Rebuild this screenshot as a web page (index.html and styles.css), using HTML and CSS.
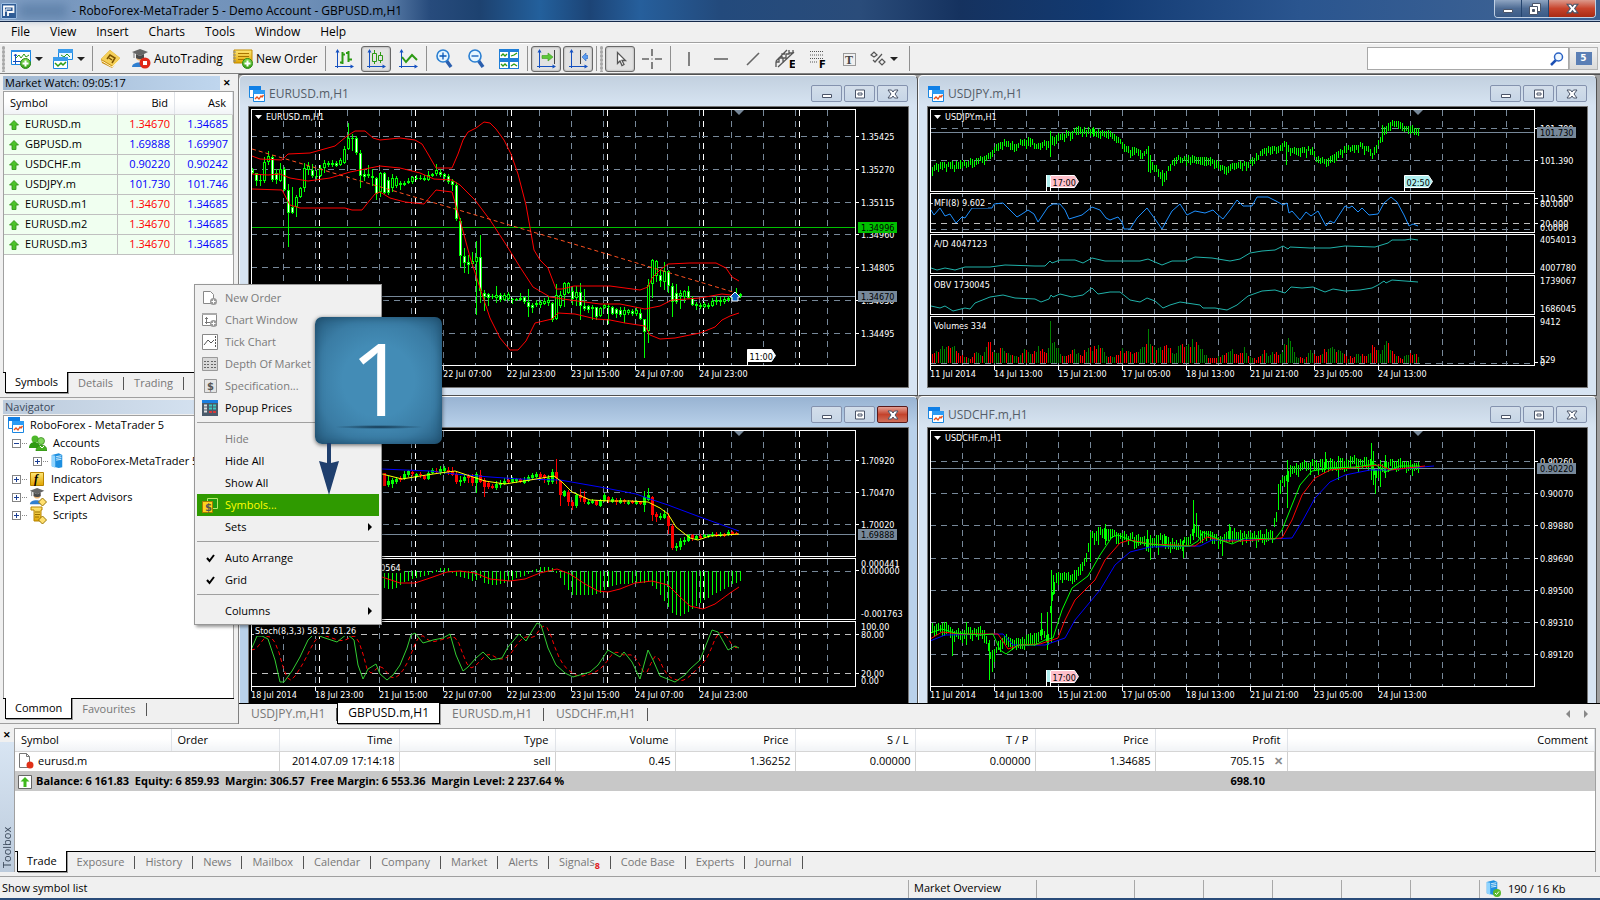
FILE: index.html
```
<!DOCTYPE html>
<html lang="en">
<head>
<meta charset="UTF-8">
<meta name="viewport" content="width=device-width, initial-scale=1.0">
<title>RoboForex-MetaTrader 5</title>
<link rel="stylesheet" href="styles.css">
</head>
<body>

<svg class="defs" aria-hidden="true">
  <defs>
    <linearGradient id="g-green" x1="0" y1="0" x2="0" y2="1"><stop offset="0" stop-color="#8be05a"/><stop offset="1" stop-color="#2f9a12"/></linearGradient>
    <linearGradient id="g-gold" x1="0" y1="0" x2="0" y2="1"><stop offset="0" stop-color="#ffe878"/><stop offset="1" stop-color="#e0a400"/></linearGradient>
    <symbol id="i-charts" viewBox="0 0 16 16">
      <path d="M.5 1.500h11v10H.5z" fill="#fff" stroke="#1a86e0"/><path d="M0 0h12v4H0z" fill="#0f7fe6"/>
      <path d="M4.500 5.500h11v10h-11z" fill="#fff" stroke="#1a86e0"/><path d="M4 4h12v4H4z" fill="#2b9bf4"/>
      <path d="M6 13l2-2 2 2 2-3 1 1 1.500-2" fill="none" stroke="#e8501a" stroke-width="1.300"/>
    </symbol>
    <symbol id="i-up" viewBox="0 0 10 10"><path d="M5 .5L9.500 5H7v4.500H3V5H.5z" fill="#4cc22a" stroke="#2a8f12" stroke-width=".8"/></symbol>
    <symbol id="i-min" viewBox="0 0 12 12"><path d="M1.500 6.500h9v3h-9z" fill="#fff" stroke="#4a5468"/></symbol>
    <symbol id="i-max" viewBox="0 0 12 12"><path d="M1.500 2h9v8h-9z" fill="#fff" stroke="#4a5468"/><path d="M4 5h4v2H4z" fill="#fff" stroke="#4a5468"/></symbol>
    <symbol id="i-restore" viewBox="0 0 12 12"><path d="M3.500 .5h8v8h-8z" fill="#fff" stroke="#4a5468"/><path d="M.5 3.500h8v8h-8z" fill="#fff" stroke="#4a5468"/><path d="M3.500 6.500h2v2h-2z" fill="#456" stroke="#4a5468"/></symbol>
    <symbol id="i-x" viewBox="0 0 12 12"><path d="M1 2h3.500L6 4l1.500-2H11L8 6l3 4H7.500L6 8l-1.500 2H1l3-4z" fill="#fff" stroke="#4a5468"/></symbol>
    <symbol id="i-zoomin" viewBox="0 0 20 20"><path d="M11 11l5 7" stroke="#2b5fae" stroke-width="3.500"/><circle cx="8" cy="7" r="6" fill="#e6f6ff" stroke="#2a7fd2" stroke-width="1.600"/><path d="M8 3.500v7M4.500 7h7" stroke="#0a58b8" stroke-width="1.300"/></symbol>
    <symbol id="i-zoomout" viewBox="0 0 20 20"><path d="M11 11l5 7" stroke="#2b5fae" stroke-width="3.500"/><circle cx="8" cy="7" r="6" fill="#e6f6ff" stroke="#2a7fd2" stroke-width="1.600"/><path d="M4.500 7h7" stroke="#0a58b8" stroke-width="1.300"/></symbol>
    <symbol id="i-axes" viewBox="0 0 20 20"><path d="M3.500 3v16M1 17.500h17" stroke="#1450c0" fill="none"/><path d="M3.500 0l2 3.500h-4zM20 17.500l-3.500-2v4z" fill="#1450c0"/></symbol>
    <symbol id="i-hat" viewBox="0 0 20 20"><path d="M5 8c0 5 8 5 8 0z" fill="#e8b070"/><path d="M1 18c0-6 14-6 14 0z" fill="#2f7fd0"/><path d="M9 0l8 3-8 4-8-4z" fill="#666"/><path d="M5 5v4c2 1.500 6 1.500 8 0V5l-4 2z" fill="#4a4a4a"/><path d="M3 4v5" stroke="#777"/></symbol>
    <symbol id="i-server" viewBox="0 0 16 18"><path d="M2 2l8-2 4 2v14l-4 1-8-2z" fill="#1d8fe0"/><path d="M2 2l4 1v14l-4-2z" fill="#8fd4ff"/><path d="M7 4l6-1M7 6l6-1M7 8l6-1" stroke="#e6f7ff"/></symbol>
  </defs>
</svg>

<header class="titlebar">
  <svg class="applogo" viewBox="0 0 16 16"><path d="M0 0h16v16H0z" fill="#2c5a94"/><path d="M.5 .5h15v15H.5z" fill="none" stroke="#9fc0e4"/><path d="M3 13V3.500h9.500V9H7v4" fill="none" stroke="#fff" stroke-width="1.800"/><path d="M5 9V6h5" fill="none" stroke="#fff"/></svg>
  <span class="account"></span>
  <h1>- RoboForex-MetaTrader 5 - Demo Account - GBPUSD.m,H1</h1>
  <div class="syswin">
    <button aria-label="Minimize"><svg width="12" height="12"><use href="#i-min"/></svg></button>
    <button aria-label="Restore"><svg width="12" height="12"><use href="#i-restore"/></svg></button>
    <button class="sysclose" aria-label="Close"><svg width="13" height="13"><use href="#i-x"/></svg></button>
  </div>
</header>

<nav class="menubar">
  <button>File</button><button>View</button><button>Insert</button><button>Charts</button><button>Tools</button><button>Window</button><button>Help</button>
</nav>

<div class="toolbar">
  <span class="grip"></span>
  <button class="split" aria-label="New chart"><svg width="20" height="20"><path d="M.5 1.500h19v14H.5z" fill="#fff" stroke="#1a86e0"/><path d="M0 1h20v2H0z" fill="#2b8fe8"/><path d="M4.500 5v10M2 12.500h14M3 7l1.500-2L6 7" stroke="#1450c0" fill="none"/><path d="M5 9l3-3 2 3 3-4 2 3 3-2" stroke="#2d9a14" fill="none"/><circle cx="14.500" cy="14.500" r="5" fill="url(#g-green)" stroke="#2c8a14"/><path d="M14.500 11.500v6M11.500 14.500h6" stroke="#fff" stroke-width="2"/></svg><i class="caret"></i></button>
  <button class="split" aria-label="Profiles"><svg width="20" height="20"><path d="M5.500 .5h14v10h-14z" fill="#e9f6ff" stroke="#1a86e0"/><path d="M5 0h15v4H5z" fill="#3a9cec"/><path d="M8 6l3 2 3-3 3 3" stroke="#2d9a14" fill="none"/><path d="M.5 8.500h14v11H.5z" fill="#fff" stroke="#1a86e0"/><path d="M0 8h15v4H0z" fill="#3a9cec"/><path d="M2 14l3 3 3-3 2 2 3-3" stroke="#2d9a14" fill="none" stroke-width="1.500"/></svg><i class="caret"></i></button>
  <span class="sep"></span>
  <button class="tool" aria-label="Metaquotes"><svg width="20" height="20"><path d="M0 10L9 1l10 8-8 10L1 14z" fill="#c88c10"/><path d="M0 10L9 1l10 8-7 8z" fill="#f4cf58"/><path d="M6 10l3-4 5 3-3 5M8 9l3 2" fill="none" stroke="#7a5200" stroke-width="1.500"/><path d="M1 12l10 6 8-8" fill="none" stroke="#fff3c0"/></svg></button>
  <button class="wide"><svg width="20" height="20"><use href="#i-hat"/><circle cx="14" cy="14" r="5.500" fill="#e02818"/><path d="M12 12h4v4h-4z" fill="#fff"/></svg>AutoTrading</button>
  <button class="wide"><svg width="20" height="20"><path d="M1 1h18v13H1z" fill="url(#g-gold)" stroke="#c08a00"/><path d="M5 4.500h11M5 7.500h11M5 10.500h7" stroke="#a87400"/><path d="M0 3h3M0 6h3M0 9h3M0 12h3" stroke="#888"/><circle cx="14.500" cy="14.500" r="5" fill="url(#g-green)" stroke="#2c8a14"/><path d="M14.500 11.500v6M11.500 14.500h6" stroke="#fff" stroke-width="2"/></svg>New Order</button>
  <span class="sep"></span>
  <button class="tool" aria-label="Bar chart"><svg width="20" height="20"><use href="#i-axes"/><path d="M8.500 3v12M6 13.500h3M8 5.500h3M14.500 2v11M12 4h3M14 10.500h4" stroke="#2d9a14" stroke-width="2" fill="none"/></svg></button>
  <button class="tool on" aria-label="Candlesticks"><svg width="20" height="20"><use href="#i-axes"/><path d="M8.500 1v3M8.500 13v2M14.500 3v3M14.500 12v2M6.500 4.500h4v8h-4zM12.500 6.500h4v5h-4z" stroke="#2d9a14" fill="none"/></svg></button>
  <button class="tool" aria-label="Line chart"><svg width="20" height="20"><use href="#i-axes"/><path d="M4 8l4 5 6-7 5 5" stroke="#2d9a14" stroke-width="2" fill="none"/></svg></button>
  <span class="sep"></span>
  <button class="tool" aria-label="Zoom in"><svg width="20" height="20"><use href="#i-zoomin"/></svg></button>
  <button class="tool" aria-label="Zoom out"><svg width="20" height="20"><use href="#i-zoomout"/></svg></button>
  <button class="tool" aria-label="Tile windows"><svg width="20" height="20"><path d="M0 0h20v20H0z" fill="#1f7fd8"/><path d="M1 3h8v6H1zM11 3h8v6h-8zM1 13h8v6H1zM11 13h8v6h-8z" fill="#fff"/><path d="M2 7l2-2 2 2 2-2M12 7l3-1 3-2M2 15l2 2 2-2 2 2M12 17l3-2 3 2" stroke="#2d9a14" fill="none" stroke-width="1.300"/></svg></button>
  <span class="sep"></span>
  <button class="tool on" aria-label="Auto scroll"><svg width="20" height="20"><use href="#i-axes"/><path d="M18.500 1v14" stroke="#444"/><path d="M6 6.500h6V4l5 4-5 4V9.500H6z" fill="#5cc83a" stroke="#3a9a1c" stroke-width=".6"/></svg></button>
  <button class="tool on" aria-label="Chart shift"><svg width="20" height="20"><use href="#i-axes"/><path d="M12.500 1v14" stroke="#444"/><path d="M20 6.500h-2V4l-4 4 4 4V9.500h2z" fill="#5a9cf0" stroke="#2a66c0" stroke-width=".6"/></svg></button>
  <span class="sep"></span>
  <span class="grip"></span>
  <button class="tool on" aria-label="Cursor"><svg width="20" height="20"><path d="M7.500 3.500v11l2.500-2.500 2 4.500 2-1-2-4h3.500z" fill="#fff" stroke="#555" stroke-width="1.300"/></svg></button>
  <button class="tool" aria-label="Crosshair"><svg width="20" height="20"><path d="M10 0v7M10 13v7M0 10h7M13 10h7M9.500 10h1" stroke="#666" stroke-width="1.600"/></svg></button>
  <span class="sep"></span>
  <button class="tool" aria-label="Vertical line"><svg width="20" height="20"><path d="M10 3v14" stroke="#666" stroke-width="1.600"/></svg></button>
  <button class="tool" aria-label="Horizontal line"><svg width="20" height="20"><path d="M3 10h14" stroke="#666" stroke-width="1.600"/></svg></button>
  <button class="tool" aria-label="Trendline"><svg width="20" height="20"><path d="M4 16L16 4" stroke="#666" stroke-width="1.600"/></svg></button>
  <button class="tool" aria-label="Channel"><svg width="20" height="20"><path d="M1 12L12 1M3 18L19 3M1 18v-5h3V9h3V5h3M8 14V9h3V5h3V1M14 4h4v-3" stroke="#555" fill="none" stroke-width="1.300"/><text x="14" y="19" class="glyph">E</text></svg></button>
  <button class="tool" aria-label="Fibonacci"><svg width="20" height="20"><path d="M3 2.500h14M3 6h14M3 9.500h14M3 13h8" stroke="#555" stroke-dasharray="1 1"/><text x="12" y="19" class="glyph">F</text></svg></button>
  <button class="tool" aria-label="Text label"><svg width="20" height="20"><path d="M4.500 4.500h12v12h-12z" fill="none" stroke="#444" stroke-dasharray="1 1"/><text x="6" y="15" class="glyph tee">T</text></svg></button>
  <button class="split arrows" aria-label="Arrows"><svg width="16" height="20"><path d="M1 6l3-3 3 3-3 2zM9 13l3-3 3 3-3 3zM3 11l2 2 7-8" fill="none" stroke="#555" stroke-width="1.200"/></svg><i class="caret"></i></button>
  <span class="sep"></span>
  <label class="search"><input type="search" aria-label="Search"><svg width="14" height="14"><path d="M6 8l-5 5" stroke="#1c50b4" stroke-width="2.500"/><circle cx="8.500" cy="5" r="4" fill="#eef7ff" stroke="#2a62c4" stroke-width="1.500"/></svg></label>
  <button class="chat"><span>5</span></button>
</div>

<main class="work">
  <aside class="dock">
    <section class="panel watch">
      <header class="phead"><h2>Market Watch: 09:05:17</h2><button class="close" aria-label="Close Market Watch">✕</button></header>
      <div class="pbody">
        <table class="quotes">
          <thead><tr><th>Symbol</th><th>Bid</th><th>Ask</th></tr></thead>
          <tbody>
            <tr><td><svg width="10" height="10"><use href="#i-up"/></svg>EURUSD.m</td><td class="down">1.34670</td><td>1.34685</td></tr>
            <tr><td><svg width="10" height="10"><use href="#i-up"/></svg>GBPUSD.m</td><td>1.69888</td><td>1.69907</td></tr>
            <tr><td><svg width="10" height="10"><use href="#i-up"/></svg>USDCHF.m</td><td>0.90220</td><td>0.90242</td></tr>
            <tr><td><svg width="10" height="10"><use href="#i-up"/></svg>USDJPY.m</td><td>101.730</td><td>101.746</td></tr>
            <tr><td><svg width="10" height="10"><use href="#i-up"/></svg>EURUSD.m1</td><td class="down">1.34670</td><td>1.34685</td></tr>
            <tr><td><svg width="10" height="10"><use href="#i-up"/></svg>EURUSD.m2</td><td class="down">1.34670</td><td>1.34685</td></tr>
            <tr><td><svg width="10" height="10"><use href="#i-up"/></svg>EURUSD.m3</td><td class="down">1.34670</td><td>1.34685</td></tr>
          </tbody>
        </table>
      </div>
      <div class="tabs"><button class="active">Symbols</button><button>Details</button><button>Trading</button></div>
    </section>

    <section class="panel navi">
      <header class="phead"><h2>Navigator</h2></header>
      <ul class="pbody tree">
        <li class="root"><svg width="16" height="16"><use href="#i-charts"/></svg>RoboForex - MetaTrader 5</li>
        <li><i class="knob minus"></i><svg width="18" height="16"><circle cx="6" cy="4" r="3.500" fill="#4db82a"/><path d="M0 13c0-8 11-8 11 0z" fill="#2f9a12"/><circle cx="12" cy="6" r="3.500" fill="#7ed65a" stroke="#2a7f10" stroke-width=".7"/><path d="M7 16c0-8 11-8 11 0z" fill="#44b020" stroke="#2a7f10" stroke-width=".7"/><path d="M11 11l2 2 2-2" stroke="#fff" fill="none"/></svg>Accounts</li>
        <li class="sub"><i class="knob"></i><svg width="14" height="16"><use href="#i-server"/></svg>RoboForex-MetaTrader 5</li>
        <li><i class="knob"></i><svg width="16" height="16"><path d="M1.500 1.500h13v13h-13z" fill="url(#g-gold)" stroke="#b88400"/><text x="5" y="12" class="glyph fx">f</text></svg>Indicators</li>
        <li><i class="knob"></i><svg width="18" height="18"><use href="#i-hat"/><path d="M13.500 10l4 4-4 4-4-4z" fill="#ffe070" stroke="#9a7400"/></svg>Expert Advisors</li>
        <li><i class="knob"></i><svg width="18" height="18"><path d="M2 1h11v3h-1v11H5V4H2z" fill="url(#g-gold)" stroke="#b88400"/><path d="M6 6h5M6 8.500h5M6 11h4" stroke="#9a7000"/><path d="M13.500 10l4 4-4 4-4-4z" fill="#ffe070" stroke="#9a7400"/></svg>Scripts</li>
      </ul>
      <div class="tabs"><button class="active">Common</button><button>Favourites</button></div>
    </section>
  </aside>

  <section class="mdi">
    <div class="windows">
      <article class="win">
        <header><svg width="16" height="16"><use href="#i-charts"/></svg><h2>EURUSD.m,H1</h2><button aria-label="Minimize"><svg width="12" height="12"><use href="#i-min"/></svg></button><button aria-label="Maximize"><svg width="12" height="12"><use href="#i-max"/></svg></button><button aria-label="Close"><svg width="12" height="12"><use href="#i-x"/></svg></button></header>
        <svg class="chart" id="eurusd"></svg>
      </article>
      <article class="win">
        <header><svg width="16" height="16"><use href="#i-charts"/></svg><h2>USDJPY.m,H1</h2><button aria-label="Minimize"><svg width="12" height="12"><use href="#i-min"/></svg></button><button aria-label="Maximize"><svg width="12" height="12"><use href="#i-max"/></svg></button><button aria-label="Close"><svg width="12" height="12"><use href="#i-x"/></svg></button></header>
        <svg class="chart" id="usdjpy"></svg>
      </article>
      <article class="win front">
        <header><svg width="16" height="16"><use href="#i-charts"/></svg><h2>GBPUSD.m,H1</h2><button aria-label="Minimize"><svg width="12" height="12"><use href="#i-min"/></svg></button><button aria-label="Maximize"><svg width="12" height="12"><use href="#i-max"/></svg></button><button class="red" aria-label="Close"><svg width="12" height="12"><use href="#i-x"/></svg></button></header>
        <svg class="chart" id="gbpusd"></svg>
      </article>
      <article class="win">
        <header><svg width="16" height="16"><use href="#i-charts"/></svg><h2>USDCHF.m,H1</h2><button aria-label="Minimize"><svg width="12" height="12"><use href="#i-min"/></svg></button><button aria-label="Maximize"><svg width="12" height="12"><use href="#i-max"/></svg></button><button aria-label="Close"><svg width="12" height="12"><use href="#i-x"/></svg></button></header>
        <svg class="chart" id="usdchf"></svg>
      </article>
    </div>
    <div class="tabs charttabs">
      <button>USDJPY.m,H1</button><button class="active">GBPUSD.m,H1</button><button>EURUSD.m,H1</button><button>USDCHF.m,H1</button>
      <span class="scroll"><i class="left"></i><i class="right"></i></span>
    </div>
  </section>
</main>

<section class="toolbox">
  <div class="side"><button class="close" aria-label="Close Toolbox">✕</button><h2>Toolbox</h2></div>
  <div class="boxbody">
    <table class="trade">
      <colgroup><col class="c-sym"><col class="c-ord"><col class="c-num"><col class="c-sym"><col class="c-num"><col class="c-num"><col class="c-num"><col class="c-num"><col class="c-num"><col class="c-pro"><col></colgroup>
      <thead><tr><th>Symbol</th><th>Order</th><th>Time</th><th>Type</th><th>Volume</th><th>Price</th><th>S / L</th><th>T / P</th><th>Price</th><th>Profit</th><th>Comment</th></tr></thead>
      <tbody>
        <tr><td><svg width="16" height="16"><path d="M1.500 .5h7l3 3v11h-10z" fill="#fff" stroke="#777"/><path d="M8.500 .5v3h3" fill="none" stroke="#777"/><circle cx="12" cy="12" r="3.500" fill="#e03018"/></svg>eurusd.m</td><td></td><td>2014.07.09 17:14:18</td><td>sell</td><td>0.45</td><td>1.36252</td><td>0.00000</td><td>0.00000</td><td>1.34685</td><td class="profit">705.15<button class="drop" aria-label="Close position">✕</button></td><td></td></tr>
        <tr class="total"><td colspan="9"><svg width="14" height="14"><path d="M.5 .5h13v13H.5z" fill="#fff" stroke="#666"/><path d="M7 2l4.500 4.500H8.500V12h-3V6.500h-3z" fill="#3fb81c"/></svg>Balance: 6 161.83&nbsp; Equity: 6 859.93&nbsp; Margin: 306.57&nbsp; Free Margin: 6 553.36&nbsp; Margin Level: 2 237.64 %</td><td class="profit">698.10</td><td></td></tr>
      </tbody>
    </table>
    <div class="fill"></div>
    <div class="tabs">
      <button class="active">Trade</button><button>Exposure</button><button>History</button><button>News</button><button>Mailbox</button><button>Calendar</button><button>Company</button><button>Market</button><button>Alerts</button><button>Signals<sub>8</sub></button><button>Code Base</button><button>Experts</button><button>Journal</button>
    </div>
  </div>
</section>

<footer class="status">
  <span class="hint">Show symbol list</span><span class="s1">Market Overview</span><span class="s2"></span><span class="s3"></span><span class="s3"></span><span class="s3"></span><span class="s3"></span><span class="s3"></span>
  <span class="net"><svg width="18" height="18"><use href="#i-server" width="14" height="16"/><circle cx="12" cy="13" r="4" fill="#58b82c"/><path d="M10 13l1.500 1.500L14 11.500" stroke="#fff" fill="none"/></svg>190 / 16 Kb</span>
</footer>

<ul class="popup">
  <li><button disabled><svg width="16" height="16"><path d="M1.500 1.500h7l3 3v9h-10z" fill="#fff" stroke="#888"/><circle cx="11.500" cy="11.500" r="3.500" fill="#999"/><path d="M11.500 9.500v4M9.500 11.500h4" stroke="#fff"/></svg>New Order</button></li>
  <li><button disabled><svg width="16" height="16"><path d="M.5 1.500h14v12H.5z" fill="#fff" stroke="#888"/><path d="M0 1h15v2H0z" fill="#aaa"/><path d="M4.500 5v7M3 6.500h3M3 10.500h5" stroke="#777"/><circle cx="11.500" cy="11.500" r="3.500" fill="#999"/><path d="M11.500 9.500v4M9.500 11.500h4" stroke="#fff"/></svg>Chart Window</button></li>
  <li><button disabled><svg width="16" height="16"><path d="M.5 .5h15v15H.5z" fill="#fff" stroke="#888"/><path d="M2 11l4-5 3 3 3-3" fill="none" stroke="#555"/><path d="M13.500 2v12" stroke="#555" stroke-dasharray="2 1"/></svg>Tick Chart</button></li>
  <li><button disabled><svg width="16" height="16"><path d="M.5 1.500h15v13H.5z" fill="#d8d8d8" stroke="#999"/><path d="M2 5.500h5M9 5.500h5M2 8.500h5M9 8.500h5M2 11.500h5M9 11.500h5" stroke="#666" stroke-dasharray="2 1"/></svg>Depth Of Market</button></li>
  <li><button disabled><svg width="16" height="16"><path d="M2.500 1.500h12v13h-12z" fill="#e4e4e4" stroke="#999"/><text x="5" y="12" class="glyph money">$</text></svg>Specification...</button></li>
  <li><button><svg width="16" height="16"><path d="M0 0h16v16H0z" fill="#4a5a6a"/><path d="M0 0h16v3H0z" fill="#1a7fe0"/><path d="M2 5.500h3M2 8.500h3M2 11.500h3" stroke="#ddd" stroke-width="2"/><path d="M7 5.500h3M11 5.500h3M7 8.500h3M11 8.500h3" stroke="#3cc8c0" stroke-width="2"/><path d="M7 12h3M11 12h3" stroke="#d83838" stroke-width="2"/></svg>Popup Prices</button></li>
  <li class="rule"></li>
  <li><button disabled>Hide</button></li>
  <li><button>Hide All</button></li>
  <li><button>Show All</button></li>
  <li><button class="hot"><svg width="16" height="16"><path d="M5.500 1.500h10v10h-10z" fill="#1f9a10" stroke="#b8e86a"/><path d="M.5 4.500h10v11H.5z" fill="#ffd21c" stroke="#a87a00"/><text x="3" y="14" class="glyph money">$</text></svg>Symbols...</button></li>
  <li><button>Sets<i class="more"></i></button></li>
  <li class="rule"></li>
  <li><button><svg width="16" height="16"><path d="M5 8l2.500 3L12 5" fill="none" stroke="#000" stroke-width="2"/></svg>Auto Arrange</button></li>
  <li><button><svg width="16" height="16"><path d="M5 8l2.500 3L12 5" fill="none" stroke="#000" stroke-width="2"/></svg>Grid</button></li>
  <li class="rule"></li>
  <li><button>Columns<i class="more"></i></button></li>
</ul>

<div class="step">1</div>
<svg class="pointer" width="20" height="52"><path d="M8 0h4v20l8-2L10 52 0 18l8 2z" fill="#1f3f6e"/></svg>

<script src="charts.js"></script>
</body>
</html>
```
FILE: styles.css
```
*{
    box-sizing:border-box;
}

body{
    margin:0;
    height:100vh;
    display:grid;
    grid-template-rows:22px 21px 31px minmax(0,1fr) 153px 23px;
    overflow:hidden;
    font:11px/16px "Open Sans","Noto Sans",sans-serif;
    color:#000;
    background:#f0f0f0;
}

h1,h2,ul{
    margin:0;
    padding:0;
    font-size:inherit;
    font-weight:normal;
    list-style:none;
}

button{
    font:inherit;
    color:inherit;
    background:none;
    border:0;
    padding:0;
    white-space:nowrap;
}

svg{
    flex:none;
}

.defs{
    position:absolute;
    width:0;
    height:0;
}

.glyph{
    font:bold 10px "DejaVu Sans",sans-serif;
}

.tee{
    font:bold 12px "Liberation Serif",serif;
    fill:#444;
}

.fx{
    font:italic bold 12px "Liberation Serif",serif;
}

.money{
    fill:#555;
}

/* title bar */
.titlebar{
    display:flex;
    align-items:center;
    padding:0 4px 0 1px;
    font-size:12px;
    background:linear-gradient(90deg,#7d9cc2 0,#6f90b8 300px,#5b7ea9 385px,#274b7c 430px,#1d4270 480px,#23609c 540px,#1c4476 590px,#265f9c 640px,#234a7c 720px,#2a4c7a 860px,#15325f 960px,#123a72 1100px,#2a558f 1300px,#3a6093 1500px);
    border-bottom:1px solid #16294a;
    box-shadow:inset 0 -1px #b4c8e0;
}

.applogo{
    width:16px;
    height:16px;
}

.account{
    width:48px;
    height:14px;
    margin:0 5px 0 2px;
    background:#6284ac;
    filter:blur(5px);
}

.syswin{
    display:flex;
    align-self:flex-start;
    margin-left:auto;
    border:1px solid #c0d0e4;
    border-top:0;
    border-radius:0 0 4px 4px;
    overflow:hidden;
}

.syswin button{
    width:27px;
    height:17px;
    display:flex;
    align-items:center;
    justify-content:center;
    border-right:1px solid #24446e;
    background:linear-gradient(#8fa5c2,#4d6b94 50%,#3a5a86);
}

.syswin .sysclose{
    width:46px;
    border:0;
    background:linear-gradient(#dc9a8c,#c8442c 50%,#a82a14);
}

/* menu */
.menubar{
    display:flex;
    align-items:center;
    gap:20px;
    padding-left:11px;
    font-size:12px;
    border-bottom:1px solid #a0a0a0;
}

/* toolbar */
.toolbar{
    display:flex;
    align-items:center;
    gap:2px;
    padding:0 2px;
    border-top:1px solid #fff;
    border-bottom:1px solid #808080;
}

.toolbar button{
    display:flex;
    align-items:center;
}

.grip{
    width:3px;
    height:26px;
    background:radial-gradient(#a8a8a8 1px,transparent 2px) 0 0/3px 4px;
}

.sep{
    width:1px;
    height:25px;
    margin:0 1px;
    background:#909090;
}

.toolbar .split{
    width:40px;
    gap:4px;
    padding-left:4px;
}

.caret{
    border:4px solid transparent;
    border-top-color:#222;
    border-bottom:0;
}

.toolbar .tool{
    width:30px;
    height:26px;
    justify-content:center;
}

.toolbar .tool.on{
    border:1px solid #686868;
    border-radius:3px;
    background:#e2e2e2;
    box-shadow:inset 0 0 2px #888;
}

.toolbar .wide{
    gap:3px;
    padding:0 5px 0 3px;
    font-size:12px;
}

.search{
    display:flex;
    align-items:center;
    width:202px;
    height:23px;
    margin-left:auto;
    padding-right:4px;
    background:#fff;
    border:1px solid #a8a8a8;
}

.search input{
    flex:1;
    min-width:0;
    border:0;
    background:none;
}

.toolbar .chat{
    width:29px;
    height:23px;
    justify-content:center;
    margin-left:-2px;
    border:1px solid #b4b4b4;
    background:linear-gradient(#f2f2f2,#dadada);
}

.chat span{
    width:16px;
    height:13px;
    font:bold 9px/13px "DejaVu Sans",sans-serif;
    color:#fff;
    background:#5b7fb5;
    text-align:center;
}

/* dock */
.work{
    display:grid;
    grid-template-columns:238px minmax(0,1fr);
    min-height:0;
}

.dock{
    display:grid;
    grid-template-rows:324px minmax(0,1fr);
}

.panel{
    display:flex;
    flex-direction:column;
    min-height:0;
    padding:2px 4px 4px 3px;
    border-bottom:1px solid #a0a0a0;
}

.phead{
    display:flex;
    align-items:center;
    height:14px;
    margin-bottom:1px;
}

.phead h2{
    flex:1;
    padding-left:2px;
    line-height:14px;
    background:linear-gradient(90deg,#9fb6d0,#bfd6ee);
}

.navi .phead h2{
    color:#3c4a5c;
    background:linear-gradient(90deg,#bccbdc,#d8e5f3);
}

.close{
    width:14px;
    font-size:9px;
    font-weight:bold;
    line-height:12px;
}

.pbody{
    flex:1;
    min-height:0;
    background:#fff;
    border:1px solid #a0a0a0;
    border-bottom:0;
    overflow:hidden;
}

table{
    border-collapse:collapse;
    table-layout:fixed;
    width:100%;
}

th{
    height:22px;
    padding:0 6px;
    font-weight:normal;
    text-align:right;
    background:linear-gradient(#fff 45%,#f1f3f6);
    border-right:1px solid #e0e3e8;
    border-bottom:1px solid #d5d5d5;
}

.quotes th:nth-child(2){
    width:57px;
}

.quotes th:nth-child(3){
    width:58px;
}

.quotes td{
    height:20px;
    padding:0 4px;
    background:#f0fff0;
    border-right:1px solid #c0c0c0;
    border-bottom:1px solid #c0c0c0;
    color:#00f;
    text-align:right;
}

.quotes td:first-child{
    padding-left:5px;
    color:#000;
}

.quotes th:first-child,.quotes td:first-child,.trade th:first-child{
    text-align:left;
}

.quotes td svg{
    margin-right:6px;
    vertical-align:-2px;
}

.quotes .down{
    color:#f00;
}

/* tabs shared by the dock, chart area and toolbox */
.tabs{
    display:flex;
    height:21px;
    padding-left:2px;
    border-top:1px solid #000;
}

.tabs button{
    position:relative;
    padding:0 11px 0 10px;
    color:#777;
}

.tabs button:not(.active)::after{
    content:"";
    position:absolute;
    right:0;
    top:4px;
    height:13px;
    border-right:1px solid #555;
}

.tabs .active{
    margin-top:-1px;
    padding:0 9px;
    color:#000;
    background:#fff;
    border:1px solid #000;
    border-top:0;
    box-shadow:1px 1px #999;
}

/* navigator tree */
.tree li{
    display:flex;
    align-items:center;
    gap:6px;
    height:18px;
    padding-left:8px;
    white-space:nowrap;
}

.tree .root{
    padding-left:4px;
}

.tree .sub{
    padding-left:29px;
}

.knob{
    position:relative;
    width:9px;
    height:9px;
    margin-right:2px;
    border:1px solid #848484;
    background:linear-gradient(#1c3f94,#1c3f94) 1px 3px/5px 1px no-repeat,linear-gradient(#1c3f94,#1c3f94) 3px 1px/1px 5px no-repeat,#fff;
}

.knob.minus{
    background:linear-gradient(#1c3f94,#1c3f94) 1px 3px/5px 1px no-repeat,#fff;
}

.knob::after{
    content:"";
    position:absolute;
    left:9px;
    top:3px;
    width:5px;
    border-top:1px dotted #888;
}

/* chart windows */
.mdi{
    display:flex;
    flex-direction:column;
    min-width:0;
    border-left:1px solid #808080;
}

.windows{
    flex:1;
    min-height:0;
    display:grid;
    grid-template-columns:1fr 1fr;
    grid-template-rows:321px minmax(0,1fr);
    padding-right:3px;
    background:#a0a0a0;
    border-top:1px solid #505050;
    overflow:hidden;
}

.win{
    display:flex;
    flex-direction:column;
    min-width:0;
    min-height:0;
    padding:0 9px 8px;
    background:linear-gradient(#c2d0df,#d7e4f2 30px);
    border:1px solid #505050;
    border-top-color:#fff;
    border-left-color:#f4f8fc;
    border-radius:5px 5px 0 0;
}

.win.front{
    background:linear-gradient(#98b3d2,#b9d1ea 30px);
}

.win:nth-child(n+3){
    padding-bottom:0;
    border-bottom:0;
}

.win header{
    display:flex;
    align-items:center;
    gap:2px;
    height:31px;
    padding-top:4px;
    font-size:12px;
    color:#555d68;
}

.win h2{
    flex:1;
    padding-left:2px;
}

.win header button{
    width:31px;
    height:17px;
    display:flex;
    align-items:center;
    justify-content:center;
    border:1px solid #8492ae;
    border-radius:2px;
    background:linear-gradient(#d3deea,#c6d5e6);
}

.win header .red{
    border-color:#5a1a1a;
    background:linear-gradient(#e4a094,#c4432c 50%,#d0705a);
}

.chart{
    flex:1;
    width:100%;
    min-height:0;
    background:#000;
    outline:1px solid #777;
}

.chart text{
    font:9px "DejaVu Sans Condensed","DejaVu Sans",sans-serif;
    fill:#fff;
}

.charttabs{
    padding-left:0;
    background:#f0f0f0;
    font-size:12px;
}

.charttabs button{
    padding:0 12px;
}

.charttabs .active{
    padding:0 10px;
}

.scroll{
    display:flex;
    align-items:center;
    gap:14px;
    margin-left:auto;
    padding-right:12px;
}

.scroll i{
    border:4px solid transparent;
}

.scroll .left{
    border-right-color:#888;
    border-left:0;
}

.scroll .right{
    border-left-color:#888;
    border-right:0;
}

/* toolbox */
.toolbox{
    display:flex;
    border-bottom:1px solid #a0a0a0;
    padding:4px 4px 4px 0;
}

.side{
    width:14px;
    display:flex;
    flex-direction:column;
}

.side .close{
    height:14px;
}

.side h2{
    flex:1;
    writing-mode:vertical-rl;
    transform:rotate(180deg);
    padding-top:4px;
    line-height:14px;
    color:#3c4a5c;
    background:linear-gradient(#bccbdc,#d8e5f3);
}

.boxbody{
    flex:1;
    min-width:0;
    display:flex;
    flex-direction:column;
    background:#fff;
    border:1px solid #a0a0a0;
    border-bottom:0;
}

.c-sym{
    width:156px;
}

.c-ord{
    width:108px;
}

.c-num{
    width:120px;
}

.c-pro{
    width:132px;
}

.trade th{
    padding:0 6px;
}

.trade th:nth-child(2){
    text-align:left;
}

.trade td{
    height:20px;
    padding:0 4px;
    text-align:right;
    border-right:1px solid #d0d0d0;
    white-space:nowrap;
}

.trade td:first-child{
    padding:0 3px;
    border-right:0;
    text-align:left;
}

.trade td svg{
    margin-right:4px;
    vertical-align:-4px;
}

.trade .profit{
    padding-right:22px;
    position:relative;
}

.drop{
    position:absolute;
    right:4px;
    color:#888;
    font-size:11px;
    font-weight:bold;
}

.trade .total td{
    font-weight:bold;
    background:#c8c8c8;
    border:0;
}

.fill{
    flex:1;
}

.toolbox .tabs{
    background:#f0f0f0;
}

.tabs sub{
    font-size:9px;
    font-weight:bold;
    color:#e01818;
    line-height:0;
}

/* status bar */
.status{
    display:flex;
    align-items:center;
    padding-top:2px;
    border-bottom:2px solid #2a4c7a;
}

.status span{
    height:18px;
    padding-left:5px;
    border-left:1px solid #a8a8a8;
}

.status .hint{
    flex:1;
    padding-left:2px;
    border:0;
}

.s1{
    width:128px;
}

.s2{
    width:98px;
}

.s3{
    width:69px;
}

.status .net{
    display:flex;
    align-items:center;
    gap:5px;
    width:121px;
}

/* context menu */
.popup{
    position:absolute;
    left:194px;
    top:284px;
    width:188px;
    padding:2px;
    background:#f0f0f0;
    border:1px solid #979797;
    box-shadow:2px 2px 3px rgba(0,0,0,.4);
}

.popup button{
    display:flex;
    align-items:center;
    width:100%;
    height:22px;
    padding-left:28px;
}

.popup button svg{
    margin:0 7px 0 -23px;
}

.popup button:disabled{
    color:#7a7a7a;
}

.popup .hot{
    color:#ff0;
    background:#2f9a00;
}

.popup .rule{
    height:6px;
    margin-top:3px;
    border-top:1px solid #a0a0a0;
}

.more{
    margin-left:auto;
    margin-right:7px;
    border:4px solid transparent;
    border-left-color:#000;
    border-right:0;
}

/* numbered callout */
.step{
    position:absolute;
    left:315px;
    top:317px;
    width:127px;
    height:127px;
    border-radius:7px;
    background:radial-gradient(ellipse 45px 2px at 64px 110px,#12344c,transparent),radial-gradient(#438cb6 40%,#3a7ca4 70%,#255a7c);
    box-shadow:0 1px 4px rgba(0,0,0,.6),inset 0 0 10px #1d4a68;
    color:#fff;
    font:100px/120px "Open Sans","Noto Sans",sans-serif;
    text-align:center;
}

.pointer{
    position:absolute;
    left:319px;
    top:443px;
}
```
FILE: charts.js
```
// all coordinates are desktop pixels; each chart's viewBox starts at its own x0,y0
const NS="http://www.w3.org/2000/svg";

function add(svg,name,attrs,text){
    const el=document.createElementNS(NS,name);
    for(const k in attrs) el.setAttribute(k,attrs[k]);
    if(text!==undefined) el.textContent=text;
    svg.appendChild(el);
    return el;
}

function rect(svg,x,y,w,h,fill){
    add(svg,"rect",{x:x,y:y,width:w,height:h,fill:fill});
}

function line(svg,x1,y1,x2,y2,color,dash){
    add(svg,"path",{d:"M"+x1+" "+y1+"L"+x2+" "+y2,stroke:color,"stroke-dasharray":dash||"none","shape-rendering":"crispEdges"});
}

function curve(svg,points,color,dash){
    add(svg,"polyline",{points:points,fill:"none",stroke:color,"stroke-dasharray":dash||"none"});
}

// text on a black plate, so the curves do not run through it
function note(svg,x,y,text){
    const el=add(svg,"text",{x:x,y:y},text);
    const b=el.getBBox();
    rect(svg,x-1,y-9,Math.ceil(b.width)+3,11,"#000");
    svg.appendChild(el);
}

// "x,y x,y" -> value at x
function reader(points){
    const p=points.split(" ").map(s=>s.split(",").map(Number));
    return function(x){
        let i=1;
        while(i<p.length-1 && p[i][0]<x) i++;
        const a=p[i-1],b=p[i];
        return a[1]+(b[1]-a[1])*(x-a[0])/(b[0]-a[0]);
    };
}

let seed=7;
function rnd(){
    seed=(seed*16807)%2147483647;
    return seed/2147483647;
}

function frame(id,c){
    const svg=document.getElementById(id);
    const w=Math.round(svg.clientWidth),h=Math.round(svg.clientHeight);
    svg.setAttribute("viewBox",c.x0+" "+c.y0+" "+w+" "+h);
    svg.axis=c.x0+w-53;
    const left=c.x0+2,right=svg.axis,grey="#778899";
    c.panes.forEach(function(p){
        for(let x=left+32;x<right;x+=32) line(svg,x+.5,p[0]+1,x+.5,p[1],grey,"6 5");
        if(c.days) for(let x=319;x<right;x+=96) line(svg,x+.5,p[0]+1,x+.5,p[1],"#fff","6 5");
    });
    c.rows.forEach(y=>line(svg,left,y+.5,right,y+.5,grey,"6 5"));
    (c.levels||[]).forEach(y=>line(svg,left,y+.5,right,y+.5,"#c0c0c0","6 5"));
    line(svg,left,c.price+.5,right,c.price+.5,grey);
    return svg;
}

function finish(svg,c){
    const left=c.x0+2,right=svg.axis,top=c.panes[0][0];
    c.panes.forEach(p=>add(svg,"rect",{x:left+.5,y:p[0]+.5,width:right-left,height:p[1]-p[0],fill:"none",stroke:"#fff"}));
    const bottom=c.panes[c.panes.length-1][1];
    c.times.forEach(function(t,i){
        line(svg,left+i*64+.5,bottom,left+i*64+.5,bottom+5,"#fff");
        add(svg,"text",{x:left+i*64,y:bottom+12},t);
    });
    c.labels.forEach(function(l){
        if(!l[2]) line(svg,right,l[0]+.5,right+4,l[0]+.5,"#fff");
        add(svg,"text",{x:right+6,y:l[0]+4},l[1]);
    });
    (c.notes||[]).forEach(n=>note(svg,left+4,n[0],n[1]));
    (c.marks||[]).forEach(function(m){
        rect(svg,right+3,m[0]-5,39,11,m[2]);
        add(svg,"text",{x:right+6,y:m[0]+4,style:"fill:#000"},m[1]);
    });
    if(c.title){
        add(svg,"path",{d:"M"+(left+4)+" "+(top+6)+"h7l-3.5 4z",fill:"#fff"});
        add(svg,"text",{x:left+15,y:top+11},c.title);
    }
    add(svg,"path",{d:"M"+c.shift+" "+(top+1)+"h10l-5 5z",fill:"#778899"});
}

function flag(svg,x,y,text,fill){
    add(svg,"path",{d:"M"+x+" "+(y+16)+"V"+y+"h24l4 6-4 6h-24",fill:fill,stroke:"#fff"});
    add(svg,"text",{x:x+2,y:y+10,style:"fill:#000"},text);
}

// EURUSD: high, body top, body bottom, low
const eur=`168 170 173 174,173 173 181 186,174 180 181 186,157 162 181 183,151 156 162 165,155 157 180 182,169 173 180 184,163 169 181 182,167 169 190 191,184 190 213 247,187 207 213 214,195 197 207 217,187 188 197 198,163 168 188 192,162 166 170 175,164 170 176 178,170 176 177 180,165 168 176 177,160 163 168 173,161 163 165 167,160 163 165 167,161 163 166 167,158 160 165 166,146 149 163 164,123 138 149 150,134 138 139 151,136 138 153 155,150 153 176 188,169 174 177 181,165 174 176 178,169 176 178 186,177 178 194 200,172 173 192 197,172 173 193 194,177 180 193 195,174 178 188 192,176 178 186 188,181 183 185 190,181 183 185 186,178 181 183 184,176 177 182 184,175 178 179 180,175 178 179 180,175 178 180 181,171 175 180 181,173 174 176 177,164 170 174 176,169 172 175 177,173 174 177 181,174 176 182 184,179 181 185 191,182 185 219 221,218 221 256 267,248 256 263 273,255 262 265 274,252 261 264 267,241 257 262 315,235 257 291 303,290 293 297 311,293 294 298 306,294 296 297 299,286 295 298 303,293 295 300 302,293 295 300 301,292 294 299 301,298 299 300 304,298 299 300 301,293 298 300 301,296 297 302 304,289 302 307 317,303 305 308 313,300 303 305 307,300 302 305 308,298 301 304 305,296 300 303 306,302 303 320 322,284 295 319 320,291 295 306 308,282 283 295 307,282 283 293 294,286 291 299 305,286 292 298 306,283 292 306 320,289 306 309 311,305 306 310 313,305 307 309 320,307 307 317 320,307 308 316 317,304 305 308 309,304 306 307 324,306 307 314 315,308 309 314 318,307 310 315 317,307 310 315 323,309 310 313 315,309 311 314 316,307 310 314 316,309 313 319 320,319 319 332 358,279 285 331 343,259 260 284 298,260 261 276 282,269 275 281 287,262 271 282 290,270 271 286 293,283 286 302 317,284 293 302 304,290 293 296 309,290 291 297 303,286 291 298 299,296 298 305 306,302 304 306 310,303 305 307 309,302 304 307 308,303 305 307 309,298 301 306 307,296 300 302 305,297 300 302 306,297 299 302 304,296 298 300 302,294 296 299 300,288 294 297 298,293 294 296 298`;
const c1={x0:249,y0:107,panes:[[109,365]],days:true,rows:[136,169,202,234,267,300,333],price:296,
    title:"EURUSD.m,H1",shift:734,
    times:["18 Jul 2014","18 Jul 23:00","21 Jul 15:00","22 Jul 07:00","22 Jul 23:00","23 Jul 15:00","24 Jul 07:00","24 Jul 23:00"],
    labels:[[136,"1.35425"],[169,"1.35270"],[202,"1.35115"],[234,"1.34960"],[267,"1.34805"],[300,"1.34650"],[333,"1.34495"]],
    marks:[[227,"1.34996","#00c000"],[296,"1.34670","#778899"]]};
const s1=frame("eurusd",c1);
line(s1,251,227.5,s1.axis,227.5,"#00c000");
let last=170;
eur.split(",").forEach(function(row,i){
    const r=row.split(" ").map(Number),x=252+i*4,mid=(r[1]+r[2])/2;
    rect(s1,x,r[0],1,r[3]-r[0],"#0f0");
    rect(s1,x-1,r[1],3,Math.max(r[2]-r[1],1),"#0f0");
    if(r[2]-r[1]>2) rect(s1,x,r[1]+1,1,r[2]-r[1]-2,mid>last?"#fff":"#000");
    last=mid;
});
curve(s1,"252,156 260,159 282,160 288,154 310,153 335,146 347,136 355,131 365,131 373,138 380,140 400,138 415,140 422,144 428,154 436,168 452,168 458,154 463,140 468,132 476,128 484,122 490,123 496,129 504,140 511,154 518,174 526,205 534,250 540,260 548,268 556,289 562,289 574,286 610,286 640,290 648,287 652,278 660,270 668,264 690,263 716,263 726,268 732,277 739,281","#f00");
curve(s1,"252,174 268,175 280,174 290,178 308,181 330,178 350,172 380,166 400,168 420,173 434,179 452,180 460,185 475,200 490,220 505,243 520,267 533,287 550,297 570,300 600,304 620,304 645,309 660,306 672,300 700,298 722,294 739,296","#f00");
curve(s1,"252,189 282,190 290,205 300,208 345,208 352,210 362,210 370,200 375,194 380,192 390,198 405,202 424,204 436,190 452,192 460,220 470,257 480,288 490,318 500,338 510,350 518,350 526,341 535,323 552,319 558,313 575,314 596,319 610,320 625,323 645,326 650,335 660,339 675,338 700,333 715,327 722,320 730,316 739,313","#f00");
curve(s1,"252,149 577,245 733,292","#ff5020","4 3");
add(s1,"path",{d:"M735 292l5 5h-2v4h-6v-4h-2z",fill:"#0a60c0",stroke:"#fff"});
finish(s1,c1);
flag(s1,747.5,349.5,"11:00","#fff");

// USDJPY
const c2={x0:928,y0:107,panes:[[109,191],[193,232],[234,273],[275,314],[316,365]],rows:[128,160,229,363],levels:[203,223],price:132,
    title:"USDJPY.m,H1",shift:1413,
    times:["11 Jul 2014","14 Jul 13:00","15 Jul 21:00","17 Jul 05:00","18 Jul 13:00","21 Jul 21:00","23 Jul 05:00","24 Jul 13:00"],
    labels:[[128,"101.790"],[160,"101.390"],[198,"110.500"],[203,"80.000"],[223,"20.000"],[227,"0.0000",1],[239,"4054013",1],[267,"4007780",1],[280,"1739067",1],[308,"1686045",1],[321,"9412",1],[359," 529",1],[362,"0"]],
    notes:[[206,"MFI(8) 9.602"],[247,"A/D 4047123"],[288,"OBV 1730045"],[329,"Volumes 334"]],
    marks:[[132,"101.730","#778899"]]};
const s2=frame("usdjpy",c2);
const jpy=reader("932,169 940,167 955,167 970,164 985,160 995,150 1003,145 1015,147 1027,142 1040,148 1050,142 1056,138 1070,134 1080,132 1093,133 1100,136 1110,135 1120,144 1130,152 1142,155 1148,150 1152,165 1160,176 1163,180 1168,170 1173,161 1185,160 1200,161 1213,163 1225,172 1235,167 1245,166 1256,159 1265,152 1275,150 1285,146 1290,153 1300,153 1311,151 1316,160 1328,162 1337,157 1345,150 1360,147 1368,152 1372,155 1378,145 1384,132 1392,125 1400,127 1408,130 1418,132");
for(let x=932;x<1420;x+=2){
    const y=jpy(x);
    rect(s2,x,Math.round(y-2-rnd()*4),1,Math.round(5+rnd()*4),"#0f0");
}
[[1050,131,157],[1093,127,137],[1148,147,172],[1150,160,173],[1162,170,186],[1286,142,165],[1382,125,141]].forEach(b=>rect(s2,b[0],b[1],1,b[2]-b[1],"#0f0"));
curve(s2,"931,210 934,215 940,208 945,216 950,214 956,223 962,217 965,218 972,208 992,208 994,204 1003,203 1010,210 1017,217 1022,214 1028,210 1034,214 1038,222 1048,207 1053,204 1060,204 1065,210 1069,219 1082,215 1092,207 1100,210 1106,218 1110,220 1118,217 1122,222 1124,229 1130,229 1137,218 1147,208 1155,219 1162,229 1168,218 1172,211 1180,204 1187,215 1195,211 1205,213 1213,210 1217,214 1223,219 1230,210 1237,200 1243,206 1252,206 1257,197 1268,197 1276,201 1283,205 1287,203 1289,213 1292,211 1300,220 1306,212 1311,216 1318,211 1326,226 1330,221 1334,223 1345,206 1349,208 1352,206 1358,212 1362,208 1369,215 1378,214 1384,203 1391,197 1397,202 1404,215 1409,226 1413,224 1418,226","#1e90ff");
curve(s2,"931,268 937,270 945,268 955,270 965,267 990,267 1005,265 1035,266 1045,266 1050,261 1052,263 1060,260 1075,260 1083,263 1092,258 1105,261 1140,261 1148,259 1162,265 1172,261 1185,261 1195,257 1212,258 1230,261 1240,259 1250,253 1262,251 1275,250 1283,246 1288,249 1290,247 1310,248 1330,248 1345,246 1375,247 1388,243 1392,240 1405,240 1411,239 1418,240","#20b2aa");
curve(s2,"931,306 940,308 945,306 953,311 965,308 970,309 975,303 990,297 1003,295 1015,298 1035,299 1041,302 1049,299 1051,295 1053,297 1060,294 1072,297 1083,295 1092,288 1098,294 1110,292 1120,292 1130,300 1140,302 1147,298 1155,301 1163,308 1170,305 1180,302 1200,305 1203,308 1215,308 1227,310 1237,305 1248,296 1262,291 1275,290 1285,293 1291,287 1302,288 1313,287 1320,290 1325,292 1333,289 1345,291 1360,290 1372,288 1378,285 1384,281 1386,283 1392,280 1405,281 1418,282","#20b2aa");
const vol=reader("932,9 943,16 952,18 960,9 970,5 975,12 982,7 989,20 995,8 1001,15 1010,8 1018,6 1024,13 1030,9 1038,16 1045,12 1052,22 1060,10 1068,8 1074,14 1080,7 1087,14 1098,17 1107,8 1113,6 1122,13 1130,12 1138,10 1145,20 1150,24 1157,14 1166,18 1174,9 1180,18 1186,16 1192,23 1200,14 1208,7 1215,5 1222,8 1230,14 1237,8 1244,16 1250,6 1256,4 1263,12 1270,8 1276,12 1281,8 1286,24 1291,20 1296,8 1304,5 1310,12 1316,6 1324,14 1338,14 1348,5 1358,10 1366,7 1372,16 1380,10 1385,22 1395,8 1402,5 1408,10 1416,8");
for(let x=932;x<1420;x+=2){
    const h=Math.round(Math.max(3,vol(x)*(.75+rnd()*.4)));
    rect(s2,x,363-h,1,h,rnd()>.5?"#008000":"#f00");
}
rect(s2,1050,321,1,42,"#008000");
rect(s2,1148,329,1,34,"#008000");
finish(s2,c2);
rect(s2,1046,175,4,12,"#afeeee");
line(s2,1046.5,175,1046.5,191,"#fff");
flag(s2,1050.5,175.5,"17:00","#ffc0cb");
flag(s2,1404.5,175.5,"02:50","#afeeee");

// GBPUSD: colour, high, body top, body bottom, low; the first candle is at x=384
const gbp=`r 473 473 486 486,g 476 481 485 487,g 478 480 484 488,g 477 479 482 484,r 476 478 480 482,g 471 474 479 480,g 470 471 475 477,r 471 472 474 476,g 473 474 476 478,r 472 474 475 478,r 475 476 479 480,g 471 473 479 480,g 468 470 473 474,r 468 471 472 473,g 466 469 472 475,g 466 468 471 474,r 467 470 472 475,r 467 471 475 476,r 472 474 482 484,g 476 480 482 486,g 474 477 481 483,r 474 476 478 483,r 474 477 483 486,g 472 474 483 493,r 470 475 482 483,r 478 480 487 497,r 481 483 487 489,r 484 486 488 489,g 481 484 488 490,g 480 483 485 488,g 478 481 484 485,r 478 480 482 484,g 477 479 482 483,g 478 479 481 483,r 478 479 482 483,g 477 480 483 484,g 475 477 481 482,g 473 475 478 479,g 472 474 477 478,r 472 474 477 479,r 474 475 478 483,g 475 478 482 485,g 469 472 482 484,r 459 472 478 484,r 480 481 495 506,g 490 491 496 497,r 490 492 502 506,r 500 502 506 510,g 493 495 506 508,r 489 495 498 502,r 491 497 502 504,g 500 502 504 505,g 499 501 503 504,r 500 501 505 506,g 499 501 506 507,g 493 495 501 502,r 496 497 500 503,g 497 499 502 503,r 498 500 502 505,g 498 500 503 504,r 499 500 502 504,g 500 502 504 505,r 500 501 503 504,g 500 502 504 505,r 501 502 504 505,g 491 497 505 512,g 488 495 500 501,r 496 497 515 521,r 512 514 517 522,g 513 516 518 520,g 510 514 518 519,r 513 516 526 534,r 524 526 548 550,g 543 546 548 551,g 538 541 547 550,g 537 540 542 545,g 534 535 541 542,r 534 535 538 541,g 535 536 539 540,r 534 536 538 539,g 534 535 537 538,g 534 535 537 538,g 532 534 536 537,r 532 534 535 537,g 532 534 536 537,r 533 534 536 537,g 530 532 535 536,r 531 532 534 535,r 532 533 534 535`;
const c3={x0:249,y0:428,panes:[[430,556],[558,619],[621,686]],days:true,rows:[460,492,524,571],levels:[634,673],price:534,shift:734,
    times:["18 Jul 2014","18 Jul 23:00","21 Jul 15:00","22 Jul 07:00","22 Jul 23:00","23 Jul 15:00","24 Jul 07:00","24 Jul 23:00"],
    labels:[[460,"1.70920"],[492,"1.70470"],[524,"1.70020"],[563,"0.000441",1],[570,"0.000000"],[613,"-0.001763",1],[626,"100.00",1],[634,"80.00"],[673,"20.00"],[680,"0.00",1]],
    notes:[[634,"Stoch(8,3,3) 58.12 61.26"]],
    marks:[[534,"1.69888","#778899"]]};
const s3=frame("gbpusd",c3);
gbp.split(",").forEach(function(row,i){
    const r=row.split(" "),x=384+i*4,color=r[0]=="g"?"#0f0":"#f00";
    rect(s3,x,r[1],1,r[4]-r[1],color);
    rect(s3,x-1,r[2],3,Math.max(r[3]-r[2],1),color);
});
curve(s3,"382,469 405,470 430,471 455,474 490,477 520,479 560,480 600,487 636,494 650,499 668,505 700,517 739,531","#00f");
curve(s3,"382,474 402,479 420,476 440,473 455,471 470,476 485,481 505,484 530,480 554,476 562,482 572,492 590,500 610,501 630,501 648,502 660,508 668,514 676,527 690,538 698,540 710,536 739,534","#ff0");
const macd=reader("380,585 388,588 396,587 404,581 412,578 420,576 430,573 440,568 448,568 456,575 466,577 472,580 480,577 484,582 492,584 500,583 508,580 516,577 524,575 532,570 540,567 548,567 554,569 560,577 566,587 572,594 590,594 600,592 608,586 620,583 640,582 648,581 656,588 664,600 672,612 680,615 688,611 700,602 712,594 724,588 732,583 740,580");
for(let x=384;x<742;x+=4){
    const y=Math.round(macd(x));
    rect(s3,x,Math.min(y,571),1,Math.abs(y-571)+1,"#0f0");
}
curve(s3,"382,577 400,583 415,583 430,578 447,572 460,571 475,573 490,579 510,581 525,579 540,573 557,569 570,574 585,584 598,591 608,592 620,589 635,583 652,581 668,585 680,597 690,606 703,609 715,604 730,593 739,587","#f00");
const stoch="251,650 257,636 262,636 268,639 275,660 280,682 284,682 292,671 300,657 308,640 314,634 325,638 337,642 347,634 354,640 358,665 363,679 368,669 376,664 380,674 387,680 393,675 400,665 407,648 411,635 415,633 423,643 433,640 443,638 450,634 456,655 463,671 468,667 476,658 483,652 491,660 502,658 508,647 519,634 526,641 532,631 537,623 541,625 548,648 556,665 565,673 573,677 590,672 598,665 608,650 620,657 624,652 632,662 640,679 648,650 653,660 660,676 675,682 685,675 690,669 700,660 706,645 712,630 718,632 728,650 735,646 739,648";
// signal line trails the main one
const main=reader(stoch);
let signal="";
for(let x=251;x<740;x+=4) signal+=x+","+((main(Math.max(x-3,251))+main(Math.max(x-7,251))+main(Math.max(x-10,251)))/3).toFixed(1)+" ";
curve(s3,signal.trim(),"#f00","4 3");
curve(s3,stoch,"#32cd32");
finish(s3,c3);
note(s3,375,571,"00564");

// USDCHF
const c4={x0:928,y0:428,panes:[[430,686]],rows:[461,493,525,558,590,622,654],price:468,
    title:"USDCHF.m,H1",shift:1413,times:c2.times,
    labels:[[461,"0.90260"],[493,"0.90070"],[525,"0.89880"],[558,"0.89690"],[590,"0.89500"],[622,"0.89310"],[654,"0.89120"]],
    marks:[[468,"0.90220","#778899"]]};
const s4=frame("usdchf",c4);
const chf=reader("932,630 945,628 953,637 965,634 980,632 985,634 990,660 1000,645 1008,640 1015,646 1025,643 1033,638 1042,635 1048,640 1051,600 1055,580 1070,580 1080,572 1085,560 1090,540 1100,533 1108,533 1118,538 1130,540 1140,542 1150,545 1160,540 1170,545 1180,546 1190,540 1195,530 1202,535 1210,538 1220,543 1230,535 1245,537 1260,538 1272,535 1277,510 1281,485 1286,482 1290,470 1305,467 1320,466 1340,466 1355,463 1370,463 1375,475 1385,465 1400,465 1418,468");
for(let x=932;x<1420;x+=2){
    const y=chf(x);
    rect(s4,x,Math.round(y-3-rnd()*5),1,Math.round(6+rnd()*7),"#0f0");
}
[[952,630,656],[944,623,636],[966,622,645],[989,640,680],[992,650,672],[1041,613,640],[1047,612,650],[1051,570,643],[1053,575,595],[1090,532,562],[1098,527,545],[1105,524,545],[1147,530,548],[1150,535,560],[1158,540,555],[1165,536,549],[1183,540,558],[1193,500,540],[1196,513,530],[1222,540,556],[1229,524,542],[1278,484,510],[1280,480,492],[1287,460,508],[1325,452,470],[1338,456,480],[1371,443,480],[1373,451,485],[1375,470,494],[1380,460,487],[1385,455,478]].forEach(b=>rect(s4,b[0],b[1],1,b[2]-b[1],"#0f0"));
curve(s4,"930,641 945,635 1003,634 1013,645 1045,645 1065,638 1075,620 1100,590 1115,565 1130,552 1150,547 1200,546 1212,540 1230,540 1250,540 1292,538 1303,520 1315,498 1330,482 1345,475 1370,470 1390,470 1410,468 1434,466","#00f");
curve(s4,"930,639 942,632 960,634 998,634 1008,649 1020,645 1040,644 1058,638 1065,620 1075,600 1095,580 1105,560 1120,543 1130,540 1150,544 1195,546 1207,537 1225,541 1240,541 1282,538 1292,520 1302,495 1315,478 1330,470 1360,467 1380,465 1390,470 1425,466","#f00");
curve(s4,"930,633 942,629 955,633 980,635 993,634 1000,650 1006,654 1018,645 1035,645 1045,640 1053,638 1062,610 1072,588 1088,576 1100,555 1112,537 1118,535 1135,542 1150,544 1170,546 1190,546 1198,541 1203,532 1220,540 1232,544 1245,538 1275,539 1282,530 1290,510 1300,485 1312,471 1330,468 1355,467 1375,464 1385,472 1400,466 1420,466","#0f0");
finish(s4,c4);
rect(s4,1046,670,4,12,"#afeeee");
line(s4,1046.5,670,1046.5,686,"#fff");
flag(s4,1050.5,670.5,"17:00","#ffc0cb");
```
